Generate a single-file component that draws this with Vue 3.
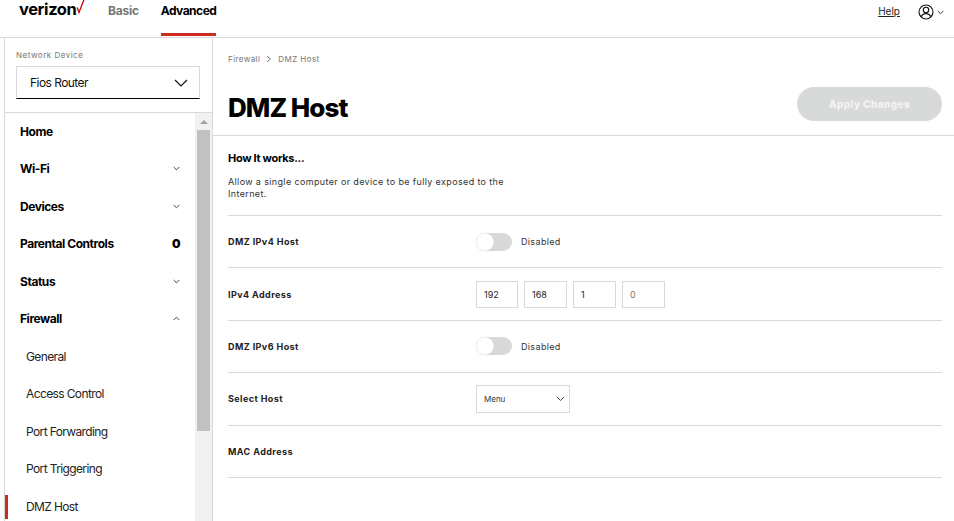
<script setup>
const nav = [
  { label: 'Home', kind: 'top' },
  { label: 'Wi-Fi', kind: 'top', icon: 'down' },
  { label: 'Devices', kind: 'top', icon: 'down' },
  { label: 'Parental Controls', kind: 'top', icon: 'zero' },
  { label: 'Status', kind: 'top', icon: 'down' },
  { label: 'Firewall', kind: 'top', icon: 'up' },
  { label: 'General', kind: 'sub' },
  { label: 'Access Control', kind: 'sub' },
  { label: 'Port Forwarding', kind: 'sub' },
  { label: 'Port Triggering', kind: 'sub' },
  { label: 'DMZ Host', kind: 'sub', active: true }
]
</script>

<template>
  <div class="page">
    <header class="topbar">
      <div class="logo">
        <span class="logo-word">verizon</span>
        <svg class="logo-check" width="9" height="15" viewBox="0 0 9 15"><path d="M1.2 8.5 3 13.5 8 .5" fill="none" stroke="#cd040b" stroke-width="1.3"/></svg>
      </div>
      <nav class="tabs">
        <span class="tab">Basic</span>
        <span class="tab tab-active">Advanced</span>
      </nav>
      <div class="top-right">
        <span class="help">Help</span>
        <svg class="user" width="16" height="16" viewBox="0 0 16 16" fill="none" stroke="#111" stroke-width="1.1">
          <circle cx="8" cy="8" r="7"/><circle cx="8" cy="6" r="2.7"/><path d="M3.2 13c.8-2.4 2.6-3.4 4.8-3.4s4 1 4.800 3.400"/>
        </svg>
        <svg width="7" height="5" viewBox="0 0 7 5" fill="none" stroke="#333"><path d="M.7 1 3.500 3.800 6.300 1"/></svg>
      </div>
    </header>

    <div class="body">
      <aside class="side">
        <div class="device">
          <div class="device-label">Network Device</div>
          <div class="device-select">
            <span>Fios Router</span>
            <svg width="14" height="8" viewBox="0 0 14 8" fill="none" stroke="#111" stroke-width="1.200"><path d="M1 1l6 6 6-6"/></svg>
          </div>
        </div>
        <div class="nav-wrap">
          <ul class="nav">
            <li v-for="item in nav" :key="item.label" :class="['nav-item', item.kind, { active: item.active }]">
              <span>{{ item.label }}</span>
              <svg v-if="item.icon === 'down'" width="7" height="5" viewBox="0 0 7 5" fill="none" stroke="#444"><path d="M.7 1 3.500 3.800 6.300 1"/></svg>
              <svg v-else-if="item.icon === 'up'" width="7" height="5" viewBox="0 0 7 5" fill="none" stroke="#444"><path d="M.7 4 3.500 1.200 6.300 4"/></svg>
              <b v-else-if="item.icon === 'zero'" class="zero">0</b>
            </li>
          </ul>
          <div class="scrollbar">
            <div class="arrow"></div>
            <div class="thumb"></div>
          </div>
        </div>
      </aside>

      <main class="main">
        <div class="crumbs">
          <span>Firewall</span>
          <svg width="6" height="8" viewBox="0 0 6 8" fill="none" stroke="#777"><path d="M1 1l3.500 3L1 7"/></svg>
          <span>DMZ Host</span>
        </div>
        <div class="title-row">
          <h1>DMZ Host</h1>
          <button class="apply">Apply Changes</button>
        </div>
        <section class="content">
          <h2>How It works...</h2>
          <p>Allow a single computer or device to be fully exposed to the Internet.</p>
          <div class="row">
            <label>DMZ IPv4 Host</label>
            <div class="field"><span class="toggle"><i></i></span><span class="state">Disabled</span></div>
          </div>
          <div class="row">
            <label>IPv4 Address</label>
            <div class="field ips">
              <span class="ip w1">192</span>
              <span class="ip">168</span>
              <span class="ip">1</span>
              <span class="ip dim">0</span>
            </div>
          </div>
          <div class="row">
            <label>DMZ IPv6 Host</label>
            <div class="field"><span class="toggle"><i></i></span><span class="state">Disabled</span></div>
          </div>
          <div class="row">
            <label>Select Host</label>
            <div class="field">
              <div class="menu">
                <span>Menu</span>
                <svg width="9" height="6" viewBox="0 0 9 6" fill="none" stroke="#444"><path d="M1 1l3.500 3.500L8 1"/></svg>
              </div>
            </div>
          </div>
          <div class="row">
            <label>MAC Address</label>
          </div>
        </section>
      </main>
    </div>
  </div>
</template>

<style>
html, body { margin: 0; background: #fff; overflow: hidden; }
</style>

<style scoped>
.page { width: 954px; height: 521px; overflow: hidden; font-family: Inter, "Liberation Sans", sans-serif; color: #000; background: #fff; }
.topbar { height: 37px; border-bottom: 1px solid #d8dada; display: flex; position: relative; box-sizing: content-box; }
.logo { width: 108px; padding-left: 19px; box-sizing: border-box; display: flex; align-items: flex-start; }
.logo-word { font-size: 16.500px; font-weight: 700; letter-spacing: -0.400px; line-height: 18px; }
.logo-check { margin-top: -1px; }
.tabs { display: flex; gap: 22px; }
.tab { font-size: 12px; font-weight: 700; color: #747676; line-height: 20px; padding-top: 1px; letter-spacing: -0.250px; }
.tab-active { color: #000; height: 36px; box-sizing: border-box; border-bottom: 3px solid #cd2c1f; padding: 1px 0 0 0; letter-spacing: -.5px; }
.top-right { margin-left: auto; display: flex; align-items: flex-start; padding: 4px 10px 0 0; }
.help { font-size: 10px; line-height: 14px; color: #222; text-decoration: underline; margin-right: 18px; }
.user { margin-right: 3px; }
.top-right svg:last-child { margin-top: 6px; }

.body { display: flex; height: 483px; }
.side { margin-left: 4px; border-left: 1px solid #d8dada; border-right: 1px solid #d8dada; flex: none; width: 207px; }
.device { height: 75px; box-sizing: border-box; border-bottom: 1px solid #d8dada; padding: 12px 11px 0 11px; }
.device-label { font-size: 8px; line-height: 10px; color: #747676; letter-spacing: .5px; }
.device-select { height: 33px; margin-top: 6px; box-sizing: border-box; border: 1px solid #d8dada; border-bottom: 1px solid #000; display: flex; align-items: center; justify-content: space-between; padding: 0 11px 0 13px; font-size: 12px; letter-spacing: -.55px; color: #111; width: 184px; }

.nav-wrap { display: flex; height: 408px; }
.nav { list-style: none; margin: 0; padding: 0; width: 190px; flex: none; }
.nav-item { height: 37.500px; display: flex; align-items: center; justify-content: space-between; padding: 0 15px 0 15px; box-sizing: border-box; position: relative; }
.nav-item.top { font-size: 12px; font-weight: 700; letter-spacing: -.45px; }
.nav-item.sub { font-size: 12px; padding-left: 21px; color: #222; letter-spacing: -.62px; }
.nav-item.top:first-child { height: 37px; }
.nav-item .zero { font-size: 12px; }
.nav-item.active::before { content: ""; position: absolute; left: 0; top: 7px; width: 3px; height: 24px; background: #cd2c1f; }
.scrollbar { width: 17px; background: #f1f1f1; }
.arrow { width: 0; height: 0; margin: 7px auto 0; border-left: 4px solid transparent; border-right: 4px solid transparent; border-bottom: 4px solid #a3a3a3; }
.thumb { height: 301px; margin: 6px 2px 0 2px; background: #c1c1c1; }

.main { flex: 1; min-width: 0; }
.crumbs { padding: 15px 0 0 15px; display: flex; align-items: center; gap: 6px; font-size: 8px; color: #747676; letter-spacing: .42px; line-height: 12px; height: 12px; }
.title-row { display: flex; justify-content: space-between; align-items: flex-start; height: 69px; box-sizing: border-box; padding: 18px 12px 0 15px; border-bottom: 1px solid #d8dada; margin-top: 2px; }
h1 { margin: 3px 0 0; font-size: 26px; line-height: 40px; font-weight: 800; letter-spacing: -.95px; }
.apply { width: 145px; height: 34px; margin-top: 2px; border: none; border-radius: 17px; background: #d8dada; color: #f3f3f3; font: 800 10px Inter, "Liberation Sans", sans-serif; letter-spacing: .4px; padding: 0; }
.content { margin: 0 12px 0 15px; }
h2 { margin: 0; padding-top: 15px; font-size: 11px; line-height: 14px; font-weight: 700; letter-spacing: -.3px; }
p { margin: 0; padding-top: 11px; width: 290px; height: 39px; font-size: 9px; line-height: 12px; color: #333; letter-spacing: .36px; }
.row { display: flex; align-items: center; border-top: 1px solid #d8dada; box-sizing: border-box; height: 52.400px; }
.row:last-child { border-bottom: 1px solid #d8dada; height: 53.400px; }
label { width: 248px; flex: none; font-size: 9px; font-weight: 700; color: #222; letter-spacing: .42px; }
.field { display: flex; align-items: center; }
.toggle { width: 36px; height: 18px; border-radius: 9px; background: #d8dada; position: relative; display: block; }
.toggle i { position: absolute; left: 0; top: 0; width: 18px; height: 18px; border-radius: 50%; background: #fff; box-shadow: 0 0 1px rgba(0,0,0,.25); }
.state { margin-left: 9px; font-size: 9px; color: #333; letter-spacing: .35px; }
.ips { gap: 6px; }
.ip { width: 43px; height: 27px; box-sizing: border-box; border: 1px solid #d8dada; font-size: 9px; line-height: 25px; padding-left: 7px; color: #222; }
.ip.w1 { width: 42px; }
.ip.dim { color: #747676; }
.menu { width: 94px; height: 28px; box-sizing: border-box; border: 1px solid #d8dada; display: flex; align-items: center; justify-content: space-between; padding: 0 4px 0 7px; font-size: 8px; color: #333; }
</style>
